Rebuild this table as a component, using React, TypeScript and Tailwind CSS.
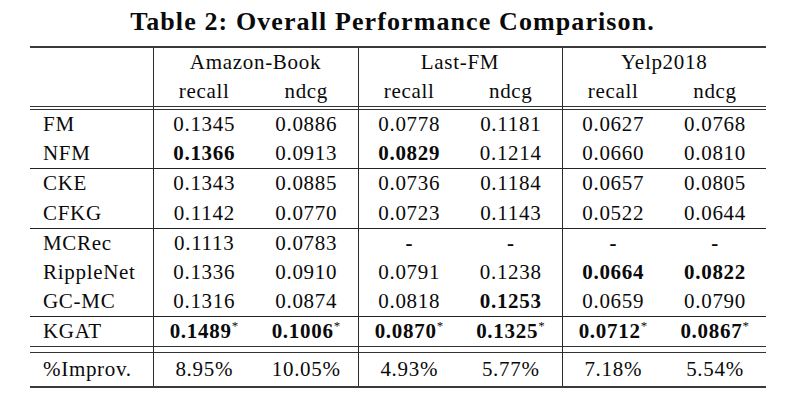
type Cell = { v: string; b?: boolean; star?: boolean }

const groups: { name: string; rows: [string, Cell[]][] }[] = [
  {
    name: 'fm',
    rows: [
      ['FM', [{ v: '0.1345' }, { v: '0.0886' }, { v: '0.0778' }, { v: '0.1181' }, { v: '0.0627' }, { v: '0.0768' }]],
      ['NFM', [{ v: '0.1366', b: true }, { v: '0.0913' }, { v: '0.0829', b: true }, { v: '0.1214' }, { v: '0.0660' }, { v: '0.0810' }]],
    ],
  },
  {
    name: 'kg',
    rows: [
      ['CKE', [{ v: '0.1343' }, { v: '0.0885' }, { v: '0.0736' }, { v: '0.1184' }, { v: '0.0657' }, { v: '0.0805' }]],
      ['CFKG', [{ v: '0.1142' }, { v: '0.0770' }, { v: '0.0723' }, { v: '0.1143' }, { v: '0.0522' }, { v: '0.0644' }]],
    ],
  },
  {
    name: 'path',
    rows: [
      ['MCRec', [{ v: '0.1113' }, { v: '0.0783' }, { v: '-', b: true }, { v: '-', b: true }, { v: '-', b: true }, { v: '-', b: true }]],
      ['RippleNet', [{ v: '0.1336' }, { v: '0.0910' }, { v: '0.0791' }, { v: '0.1238' }, { v: '0.0664', b: true }, { v: '0.0822', b: true }]],
      ['GC-MC', [{ v: '0.1316' }, { v: '0.0874' }, { v: '0.0818' }, { v: '0.1253', b: true }, { v: '0.0659' }, { v: '0.0790' }]],
    ],
  },
  {
    name: 'ours',
    rows: [
      ['KGAT', [
        { v: '0.1489', b: true, star: true }, { v: '0.1006', b: true, star: true },
        { v: '0.0870', b: true, star: true }, { v: '0.1325', b: true, star: true },
        { v: '0.0712', b: true, star: true }, { v: '0.0867', b: true, star: true },
      ]],
    ],
  },
]

const improv = ['8.95%', '10.05%', '4.93%', '5.77%', '7.18%', '5.54%']

// vertical rule after each dataset's ndcg column
const sep = (i: number) => (i % 2 === 1 && i < 5 ? 'border-r border-r-[#2a2a2a]' : '')

function Row({ label, cells, extra = '', h = 'h-[29px]' }: { label: string; cells: Cell[]; extra?: string; h?: string }) {
  return (
    <tr className={extra}>
      <td className={`${h} pl-[13px] text-left border-r border-r-[#2a2a2a]`}>{label}</td>
      {cells.map((c, i) => (
        <td key={i} className={`${h} text-center ${sep(i)} ${c.b ? 'font-bold' : ''}`}>
          {c.v}
          {c.star && <span className="align-super text-[13px] font-normal leading-none">*</span>}
        </td>
      ))}
    </tr>
  )
}

function Spacer({ h }: { h: string }) {
  return (
    <tr className="border-t border-t-[#333] border-b border-b-[#333]">
      <td className={`${h} p-0 border-r border-r-[#2a2a2a]`} />
      {[0, 1, 2, 3, 4, 5].map((i) => (
        <td key={i} className={`${h} p-0 ${sep(i)}`} />
      ))}
    </tr>
  )
}

export default function App() {
  return (
    <div className="w-[785px] h-[404px] bg-white text-[#0a0a0a] overflow-hidden" style={{ fontFamily: '"Liberation Serif", "Times New Roman", serif' }}>
      <h1 className="pt-[7px] h-[46px] text-center text-[26px] font-bold tracking-[1.1px] leading-[30px]">
        Table 2: Overall Performance Comparison.
      </h1>

      <table className="ml-[30px] w-[736px] table-fixed border-collapse text-[21px] leading-[29px] tracking-[0.7px]">
        <colgroup>
          <col className="w-[123px]" />
          <col className="w-[102px]" />
          <col className="w-[103px]" />
          <col className="w-[102px]" />
          <col className="w-[102px]" />
          <col className="w-[102px]" />
          <col className="w-[102px]" />
        </colgroup>
        <thead>
          <tr className="border-t-2 border-t-[#3a3a3a]">
            <td className="h-[28px] border-r border-r-[#2a2a2a]" />
            <td colSpan={2} className="h-[28px] text-center border-r border-r-[#2a2a2a]">Amazon-Book</td>
            <td colSpan={2} className="h-[28px] text-center border-r border-r-[#2a2a2a]">Last-FM</td>
            <td colSpan={2} className="h-[28px] text-center">Yelp2018</td>
          </tr>
          <tr>
            <td className="h-[29px] border-r border-r-[#2a2a2a]" />
            {['recall', 'ndcg', 'recall', 'ndcg', 'recall', 'ndcg'].map((t, i) => (
              <td key={i} className={`h-[29px] text-center ${sep(i)}`}>{t}</td>
            ))}
          </tr>
          <Spacer h="h-[3px]" />
        </thead>
        <tbody>
          {groups.map((g, gi) =>
            g.rows.map(([label, cells], ri) => (
              <Row
                key={label}
                label={label}
                cells={cells}
                h={g.name === 'ours' ? 'h-[30px]' : ri === 0 && gi > 0 ? 'h-[30px]' : 'h-[29px]'}
                extra={ri === 0 && gi > 0 ? 'border-t border-t-[#222]' : ''}
              />
            ))
          )}
          <Spacer h="h-[6px]" />
          <tr className="border-b-2 border-b-[#3a3a3a]">
            <td className="h-[34px] pl-[13px] text-left border-r border-r-[#2a2a2a]">%Improv.</td>
            {improv.map((v, i) => (
              <td key={i} className={`h-[34px] text-center ${sep(i)}`}>{v}</td>
            ))}
          </tr>
        </tbody>
      </table>
    </div>
  )
}
